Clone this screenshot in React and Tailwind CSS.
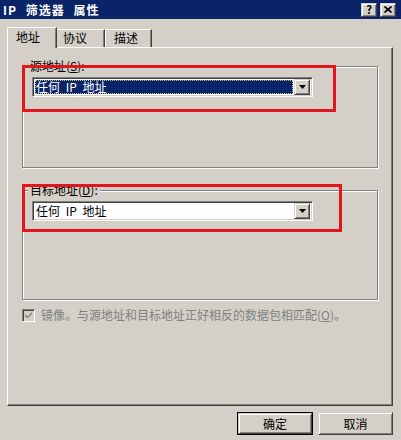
import React from 'react';

const raised =
  'border border-t-[#d4d0c8] border-l-[#d4d0c8] border-r-[#404040] border-b-[#404040] shadow-[inset_1px_1px_0_#fff,inset_-1px_-1px_0_#808080]';
const sunken =
  'border border-t-[#808080] border-l-[#808080] border-r-white border-b-white shadow-[inset_1px_1px_0_#404040,inset_-1px_-1px_0_#d4d0c8]';

// Classic dropdown combo
const Combo = ({ selected }) => (
  <div className={`w-[281px] h-[20px] bg-white flex items-center ${sunken}`}>
    <div className="flex-1 h-full flex items-center pl-[2px]">
      <div
        className={`h-[14px] w-full flex items-center pl-[1px] text-[12px] leading-[14px] [word-spacing:3px] ${
          selected ? 'bg-[#0a246a] text-white outline outline-dotted outline-[#c8c87a] -outline-offset-1' : 'text-black'
        }`}
      >
        任何 IP 地址
      </div>
    </div>
    <div className={`w-[16px] h-[16px] mr-[2px] ml-[1px] bg-[#d4d0c8] flex items-center justify-center ${raised}`}>
      <svg width="7" height="4" viewBox="0 0 7 4">
        <path d="M0 0h7L3.5 4z" fill="#000" />
      </svg>
    </div>
  </div>
);

const GroupBox = ({ label, hotkey, height, children }) => (
  <fieldset
    className={`border border-[#808080] shadow-[inset_1px_1px_0_#fff,1px_1px_0_#fff] ${height}`}
  >
    <legend className="ml-[5px] px-[2px] bg-[#d4d0c8] text-[12px] leading-[14px]">
      {label}(<span className="underline">{hotkey}</span>):
    </legend>
    <div className="pt-[4px] px-[9px]">{children}</div>
  </fieldset>
);

export default function App() {
  return (
    <div className="relative w-[401px] h-[440px] bg-[#d4d0c8] overflow-hidden font-['Noto_Sans_CJK_SC',sans-serif] text-black">
      {/* Title bar */}
      <div className="h-[19px] bg-[#0a246a] flex items-center justify-between pl-[3px] pr-[5px]">
        <span className="text-white font-bold text-[12px] leading-[14px] tracking-[1px] [word-spacing:5px]">IP 筛选器 属性</span>
        <div className="flex gap-[3px]">
          <div className={`w-[16px] h-[14px] bg-[#d4d0c8] flex items-center justify-center text-[11px] font-bold leading-none ${raised}`}>
            ?
          </div>
          <div className={`w-[16px] h-[14px] bg-[#d4d0c8] flex items-center justify-center ${raised}`}>
            <svg width="8" height="7" viewBox="0 0 8 7">
              <path d="M0.5 0.5L7.5 6.5M7.5 0.5L0.5 6.5" stroke="#000" strokeWidth="1.6" />
            </svg>
          </div>
        </div>
      </div>

      {/* Tabs */}
      <div className="flex items-end h-[20px] mt-[8px] pl-[7px]">
        <div className="relative z-10 w-[50px] h-[21px] -mb-[1px] bg-[#d4d0c8] border-l border-t border-white border-r border-r-[#404040] rounded-tl-[2px] shadow-[inset_-1px_0_0_#808080] flex items-start pt-[2px] pl-[8px] text-[12px] leading-[14px]">
          地址
        </div>
        <div className="w-[48px] h-[18px] bg-[#d4d0c8] border-t border-white border-r border-r-[#404040] shadow-[inset_-1px_0_0_#808080] flex items-start pt-[1px] pl-[6px] text-[12px] leading-[14px]">
          协议
        </div>
        <div className="w-[47px] h-[18px] bg-[#d4d0c8] border-l border-t border-white border-r border-r-[#404040] shadow-[inset_-1px_0_0_#808080] flex items-start pt-[1px] pl-[8px] text-[12px] leading-[14px]">
          描述
        </div>
      </div>

      {/* Tab panel */}
      <div className="ml-[7px] w-[386px] h-[359px] border-l border-t border-white border-r border-b border-r-[#404040] border-b-[#404040] shadow-[inset_-1px_-1px_0_#808080] px-[14px] pt-[11px]">
        <GroupBox label="源地址" hotkey="S" height="h-[109px]">
          <Combo selected />
        </GroupBox>
        <div className="h-[15px]" />
        <GroupBox label="目标地址" hotkey="D" height="h-[117px]">
          <Combo />
        </GroupBox>
        <div className="flex items-center gap-[6px] mt-[8px]">
          <div className={`w-[13px] h-[13px] bg-[#d4d0c8] flex items-center justify-center ${sunken}`}>
            <svg width="7" height="7" viewBox="0 0 7 7">
              <path d="M0 2v2l2 2h1l4-4V0L2.5 4.5z" fill="#808080" />
            </svg>
          </div>
          <span className="text-[12px] leading-[14px] text-[#808080]">
            镜像。与源地址和目标地址正好相反的数据包相匹配(<span className="underline">O</span>)。
          </span>
        </div>
      </div>

      {/* Buttons */}
      <div className="flex justify-end gap-[5px] pr-[8px] pt-[6px]">
        <div className="w-[76px] h-[23px] border border-black">
          <div className={`w-full h-full flex items-center justify-center text-[12px] ${raised}`}>确定</div>
        </div>
        <div className={`w-[75px] h-[23px] flex items-center justify-center text-[12px] ${raised}`}>取消</div>
      </div>

      {/* Red annotation boxes */}
      <div className="absolute left-[22px] top-[65px] w-[314px] h-[47px] border-[3px] border-[#e2161d]" />
      <div className="absolute left-[22px] top-[184px] w-[320px] h-[48px] border-[3px] border-[#e2161d]" />
    </div>
  );
}
